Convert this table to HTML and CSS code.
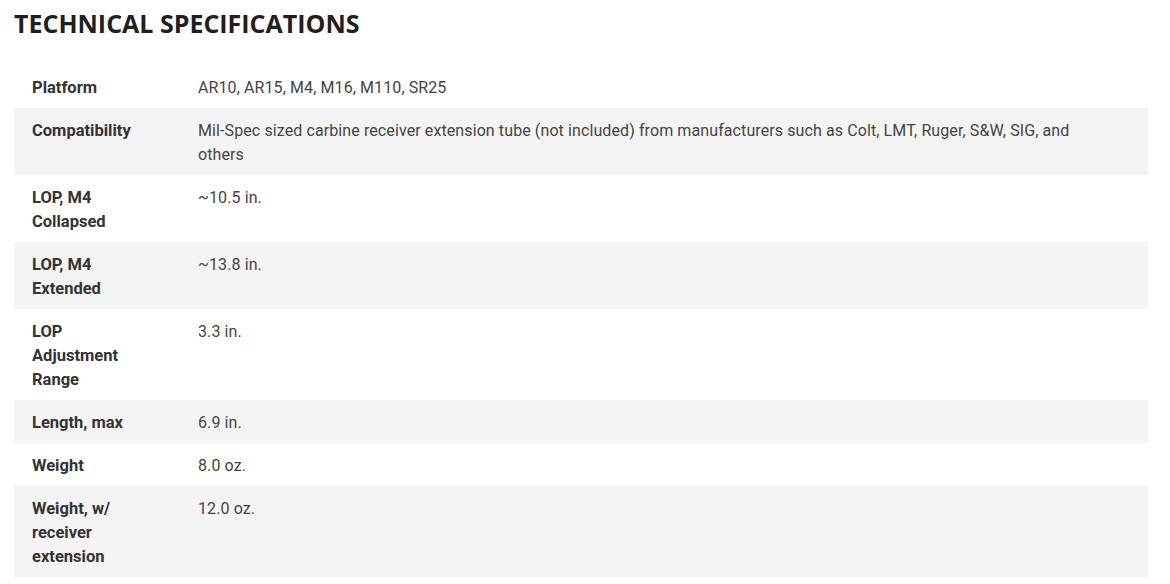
FILE: index.html
```html
<!DOCTYPE html>
<html>
<head>
<meta charset="utf-8">
<link rel="stylesheet" href="styles.css">
</head>
<body>
<section class="specs">
  <h1 class="specs-title">TECHNICAL SPECIFICATIONS</h1>
  <table class="spec-table">
    <tbody>
      <tr><th>Platform</th><td>AR10, AR15, M4, M16, M110, SR25</td></tr>
      <tr class="alt"><th>Compatibility</th><td>Mil-Spec sized carbine receiver extension tube (not included) from manufacturers such as Colt, LMT, Ruger, S&amp;W, SIG, and others</td></tr>
      <tr><th>LOP, M4 Collapsed</th><td>~10.5 in.</td></tr>
      <tr class="alt"><th>LOP, M4 Extended</th><td>~13.8 in.</td></tr>
      <tr><th>LOP Adjustment Range</th><td>3.3 in.</td></tr>
      <tr class="alt"><th>Length, max</th><td>6.9 in.</td></tr>
      <tr><th>Weight</th><td>8.0 oz.</td></tr>
      <tr class="alt"><th>Weight, w/ receiver extension</th><td>12.0 oz.</td></tr>
    </tbody>
  </table>
</section>
</body>
</html>
```
FILE: styles.css
```css
html, body {
  margin: 0;
  padding: 0;
  background: #fff;
}
.specs {
  padding: 6px 22px 0 14px;
}
.specs-title {
  margin: 0;
  font-family: "Open Sans", "Liberation Sans", sans-serif;
  font-weight: 700;
  font-size: 25px;
  line-height: 34px;
  color: #231f20;
}
.spec-table {
  margin-top: 25px;
  width: 100%;
  border-collapse: collapse;
  font-family: Roboto, "Liberation Sans", sans-serif;
  font-size: 16px;
  line-height: 24px;
}
.spec-table th,
.spec-table td {
  vertical-align: top;
  padding: 11px 0 8px;
  text-align: left;
}
.spec-table th {
  width: 105px;
  padding-left: 18px;
  padding-right: 61px;
  font-size: 16.5px;
  font-weight: 700;
  color: #333;
}
.spec-table td {
  color: #444;
  font-weight: 400;
  padding-right: 60px;
  letter-spacing: 0.1px;
}
.spec-table tr.alt {
  background: #f4f4f4;
}
```
